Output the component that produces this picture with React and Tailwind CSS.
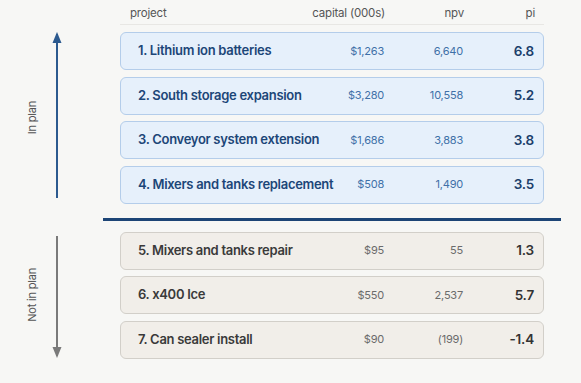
import React from 'react';

const inPlan = [
  { name: '1. Lithium ion batteries', capital: '$1,263', npv: '6,640', pi: '6.8' },
  { name: '2. South storage expansion', capital: '$3,280', npv: '10,558', pi: '5.2' },
  { name: '3. Conveyor system extension', capital: '$1,686', npv: '3,883', pi: '3.8' },
  { name: '4. Mixers and tanks replacement', capital: '$508', npv: '1,490', pi: '3.5' },
];

const notInPlan = [
  { name: '5. Mixers and tanks repair', capital: '$95', npv: '55', pi: '1.3' },
  { name: '6. x400 Ice', capital: '$550', npv: '2,537', pi: '5.7' },
  { name: '7. Can sealer install', capital: '$90', npv: '(199)', pi: '-1.4' },
];

function Row({ p, blue }) {
  return (
    <div
      className={
        'flex items-center h-[38px] rounded-[6px] border-[1.5px] pl-[17px] pr-[9px] ' +
        (blue ? 'bg-[#e6f0fb] border-[#b4cdea]' : 'bg-[#f1eee9] border-[#d2cfc9]')
      }
    >
      <span className={'flex-1 whitespace-nowrap text-[13px] font-semibold tracking-[-0.3px] ' + (blue ? 'text-[#1c4678]' : 'text-[#3a3a3a]')}>
        {p.name}
      </span>
      <span className={'w-[50px] text-right text-[11px] ' + (blue ? 'text-[#3f70a8]' : 'text-[#6b6b6b]')}>
        {p.capital}
      </span>
      <span className={'w-[79px] text-right text-[11px] ' + (blue ? 'text-[#3f70a8]' : 'text-[#6b6b6b]')}>
        {p.npv}
      </span>
      <span className={'w-[71px] text-right text-[13.5px] font-semibold ' + (blue ? 'text-[#1b3f6b]' : 'text-[#333333]')}>
        {p.pi}
      </span>
    </div>
  );
}

function Arrow({ up, height, color }) {
  return (
    <svg width="12" height={height} viewBox={`0 0 12 ${height}`}>
      {up ? (
        <>
          <path d={`M6 2 L6 ${height}`} stroke={color} strokeWidth="2" />
          <path d="M6 0 L10.5 11 L1.5 11 Z" fill={color} />
        </>
      ) : (
        <>
          <path d={`M6 0 L6 ${height - 2}`} stroke={color} strokeWidth="2" />
          <path d={`M6 ${height} L10.5 ${height - 11} L1.5 ${height - 11} Z`} fill={color} />
        </>
      )}
    </svg>
  );
}

export default function App() {
  return (
    <div className="w-[581px] h-[383px] bg-[#f7f7f5] font-['Inter',sans-serif] tracking-[-0.2px]">
      {/* header */}
      <div className="ml-[120px] w-[424px] h-[25px] flex items-center pt-[3px] pl-[10px] pr-[9px] border-b-[1.5px] border-[#e8e7e4] text-[11.5px] text-[#555555]">
        <span className="flex-1">project</span>
        <span className="w-[120px] text-right">capital (000s)</span>
        <span className="w-[79px] text-right">npv</span>
        <span className="w-[71px] text-right">pi</span>
      </div>

      <div className="flex mt-[7px]">
        <div className="w-[120px] flex items-center pl-[24px] gap-[10px]">
          <span className="[writing-mode:vertical-rl] rotate-180 text-[11px] text-[#555555]">In plan</span>
          <div className="self-start">
            <Arrow up height={166} color="#2c5a8f" />
          </div>
        </div>
        <div className="w-[424px] flex flex-col gap-[6.5px]">
          {inPlan.map((p) => (
            <Row key={p.name} p={p} blue />
          ))}
        </div>
      </div>

      <div className="ml-[103px] w-[458px] h-[3px] bg-[#1d4576] mt-[14px]" />

      <div className="flex mt-[11px]">
        <div className="w-[120px] flex items-center pl-[24px] gap-[10px]">
          <span className="[writing-mode:vertical-rl] rotate-180 text-[11px] text-[#555555]">Not in plan</span>
          <div className="self-start mt-[4px]">
            <Arrow height={122} color="#7a7a7a" />
          </div>
        </div>
        <div className="w-[424px] flex flex-col gap-[6.5px]">
          {notInPlan.map((p) => (
            <Row key={p.name} p={p} />
          ))}
        </div>
      </div>
    </div>
  );
}
